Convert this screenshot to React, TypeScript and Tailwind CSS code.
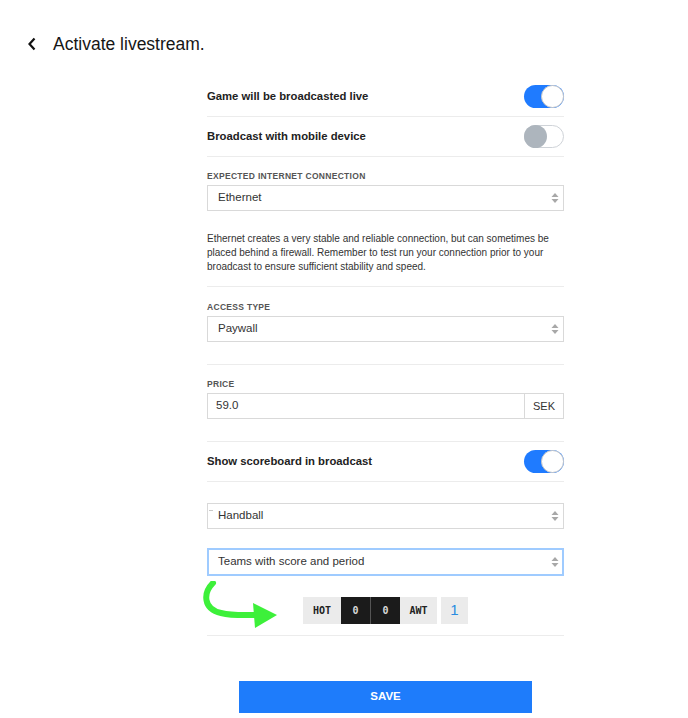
import React from 'react'

const font = { fontFamily: '"Liberation Sans", Arial, sans-serif' }

function Toggle({ on }: { on: boolean }) {
  if (on) {
    return (
      <div className="relative h-[23px] w-[40px] rounded-full bg-[#1f7bff]">
        <div className="absolute right-0 top-0 h-[23px] w-[23px] rounded-full border border-[#c8c8c8] bg-white" />
      </div>
    )
  }
  return (
    <div className="relative h-[23px] w-[40px] rounded-full border border-[#cfd3d8] bg-white">
      <div className="absolute left-[-1px] top-[-1px] h-[23px] w-[23px] rounded-full bg-[#adb5bd]" />
    </div>
  )
}

function Arrows() {
  return (
    <svg width="8" height="12" viewBox="0 0 8 12" className="shrink-0">
      <path d="M4 1 L7.5 5 L0.5 5 Z" fill="#a8a8a8" />
      <path d="M4 11 L7.5 7 L0.5 7 Z" fill="#a8a8a8" />
    </svg>
  )
}

function Select({ value, focus, mark }: { value: string; focus?: boolean; mark?: boolean }) {
  return (
    <div
      className={
        focus
          ? 'relative flex h-[28px] items-center justify-between border-2 border-[#9fcbff] bg-white pl-[9px] pr-[3px]'
          : 'relative flex h-[26px] items-center justify-between border border-[#d9d9d9] bg-white pl-[10px] pr-[4px]'
      }
    >
      {mark && <span className="absolute left-[1px] top-[6px] h-[1px] w-[4px] bg-[#c8c8c8]" />}
      <span className="text-[11.5px] text-[#333]">{value}</span>
      <Arrows />
    </div>
  )
}

function Label({ children }: { children: React.ReactNode }) {
  return (
    <div className="mb-[3px] h-[12px] text-[8.5px] font-bold leading-[12px] tracking-[0.3px] text-[#555]">
      {children}
    </div>
  )
}

function Divider() {
  return <div className="h-px bg-[#ececec]" />
}

function ToggleRow({ label, on }: { label: string; on: boolean }) {
  return (
    <div className="flex h-[39px] items-center justify-between">
      <span className="text-[11.3px] font-bold text-[#222]">{label}</span>
      <Toggle on={on} />
    </div>
  )
}

function GreenArrow() {
  return (
    <svg width="80" height="52" viewBox="0 0 80 52" className="absolute left-[-6px] top-[-16px]">
      <path
        d="M12 2 C2 12 2 28 20 32 C32 35 44 34 56 34"
        fill="none"
        stroke="#3df03a"
        strokeWidth="6"
        strokeLinecap="round"
      />
      <path d="M52 22 L76 34 L54 47 Z" fill="#3df03a" />
    </svg>
  )
}

function Scoreboard() {
  const mono = { fontFamily: '"DejaVu Sans Mono", "Liberation Mono", monospace' }
  return (
    <div className="flex h-[27px] items-stretch text-[10px] font-bold" style={mono}>
      <div className="flex w-[38px] items-center justify-center bg-[#ebebeb] text-[#222]">HOT</div>
      <div className="flex w-[29px] items-center justify-center bg-[#1b1b1b] text-[#d8d8d8]">0</div>
      <div className="w-px bg-[#555]" />
      <div className="flex w-[29px] items-center justify-center bg-[#1b1b1b] text-[#d8d8d8]">0</div>
      <div className="flex w-[37px] items-center justify-center bg-[#ebebeb] text-[#222]">AWT</div>
      <div
        className="ml-[4px] flex w-[27px] items-center justify-center bg-[#ebebeb] text-[15px] font-normal text-[#2a8be0]"
        style={font}
      >
        1
      </div>
    </div>
  )
}

export default function App() {
  return (
    <div className="h-[718px] w-[688px] overflow-hidden bg-white" style={font}>
      <header className="mt-[34px] flex h-[20px] items-center pl-[27px]">
        <svg width="10" height="14" viewBox="0 0 10 14" className="mr-[16px]">
          <path d="M7.5 1.5 L2.5 7 L7.5 12.5" fill="none" stroke="#111" strokeWidth="2.2" />
        </svg>
        <h1 className="text-[17.5px] text-[#161616]">Activate livestream.</h1>
      </header>

      <main className="ml-[207px] mt-[23px] w-[357px]">
        <ToggleRow label="Game will be broadcasted live" on />
        <Divider />
        <ToggleRow label="Broadcast with mobile device" on={false} />
        <Divider />

        <section className="pb-[12px] pt-[13px]">
          <Label>EXPECTED INTERNET CONNECTION</Label>
          <Select value="Ethernet" />
          <p className="mt-[21px] text-[10px] leading-[14px] text-[#333]">
            Ethernet creates a very stable and reliable connection, but can sometimes be
            <br />
            placed behind a firewall. Remember to test run your connection prior to your
            <br />
            broadcast to ensure sufficient stability and speed.
          </p>
        </section>
        <Divider />

        <section className="pb-[22px] pt-[14px]">
          <Label>ACCESS TYPE</Label>
          <Select value="Paywall" />
        </section>
        <Divider />

        <section className="pb-[22px] pt-[13px]">
          <Label>PRICE</Label>
          <div className="flex h-[26px]">
            <div className="flex flex-1 items-center border border-[#d9d9d9] pl-[8px] text-[11.5px] text-[#333]">
              59.0
            </div>
            <div className="flex w-[39px] items-center justify-center border border-l-0 border-[#d9d9d9] text-[11px] text-[#333]">
              SEK
            </div>
          </div>
        </section>
        <Divider />

        <ToggleRow label="Show scoreboard in broadcast" on />
        <Divider />

        <div className="mt-[21px]">
          <Select value="Handball" mark />
        </div>
        <div className="mt-[19px]">
          <Select value="Teams with score and period" focus />
        </div>
        <div className="relative mb-[11px] mt-[21px] flex justify-center">
          <GreenArrow />
          <Scoreboard />
        </div>
        <Divider />

        <div className="mt-[45px] flex justify-center">
          <button className="h-[32px] w-[293px] bg-[#1e7cfb] text-[11.5px] font-bold text-white">SAVE</button>
        </div>
      </main>
    </div>
  )
}
